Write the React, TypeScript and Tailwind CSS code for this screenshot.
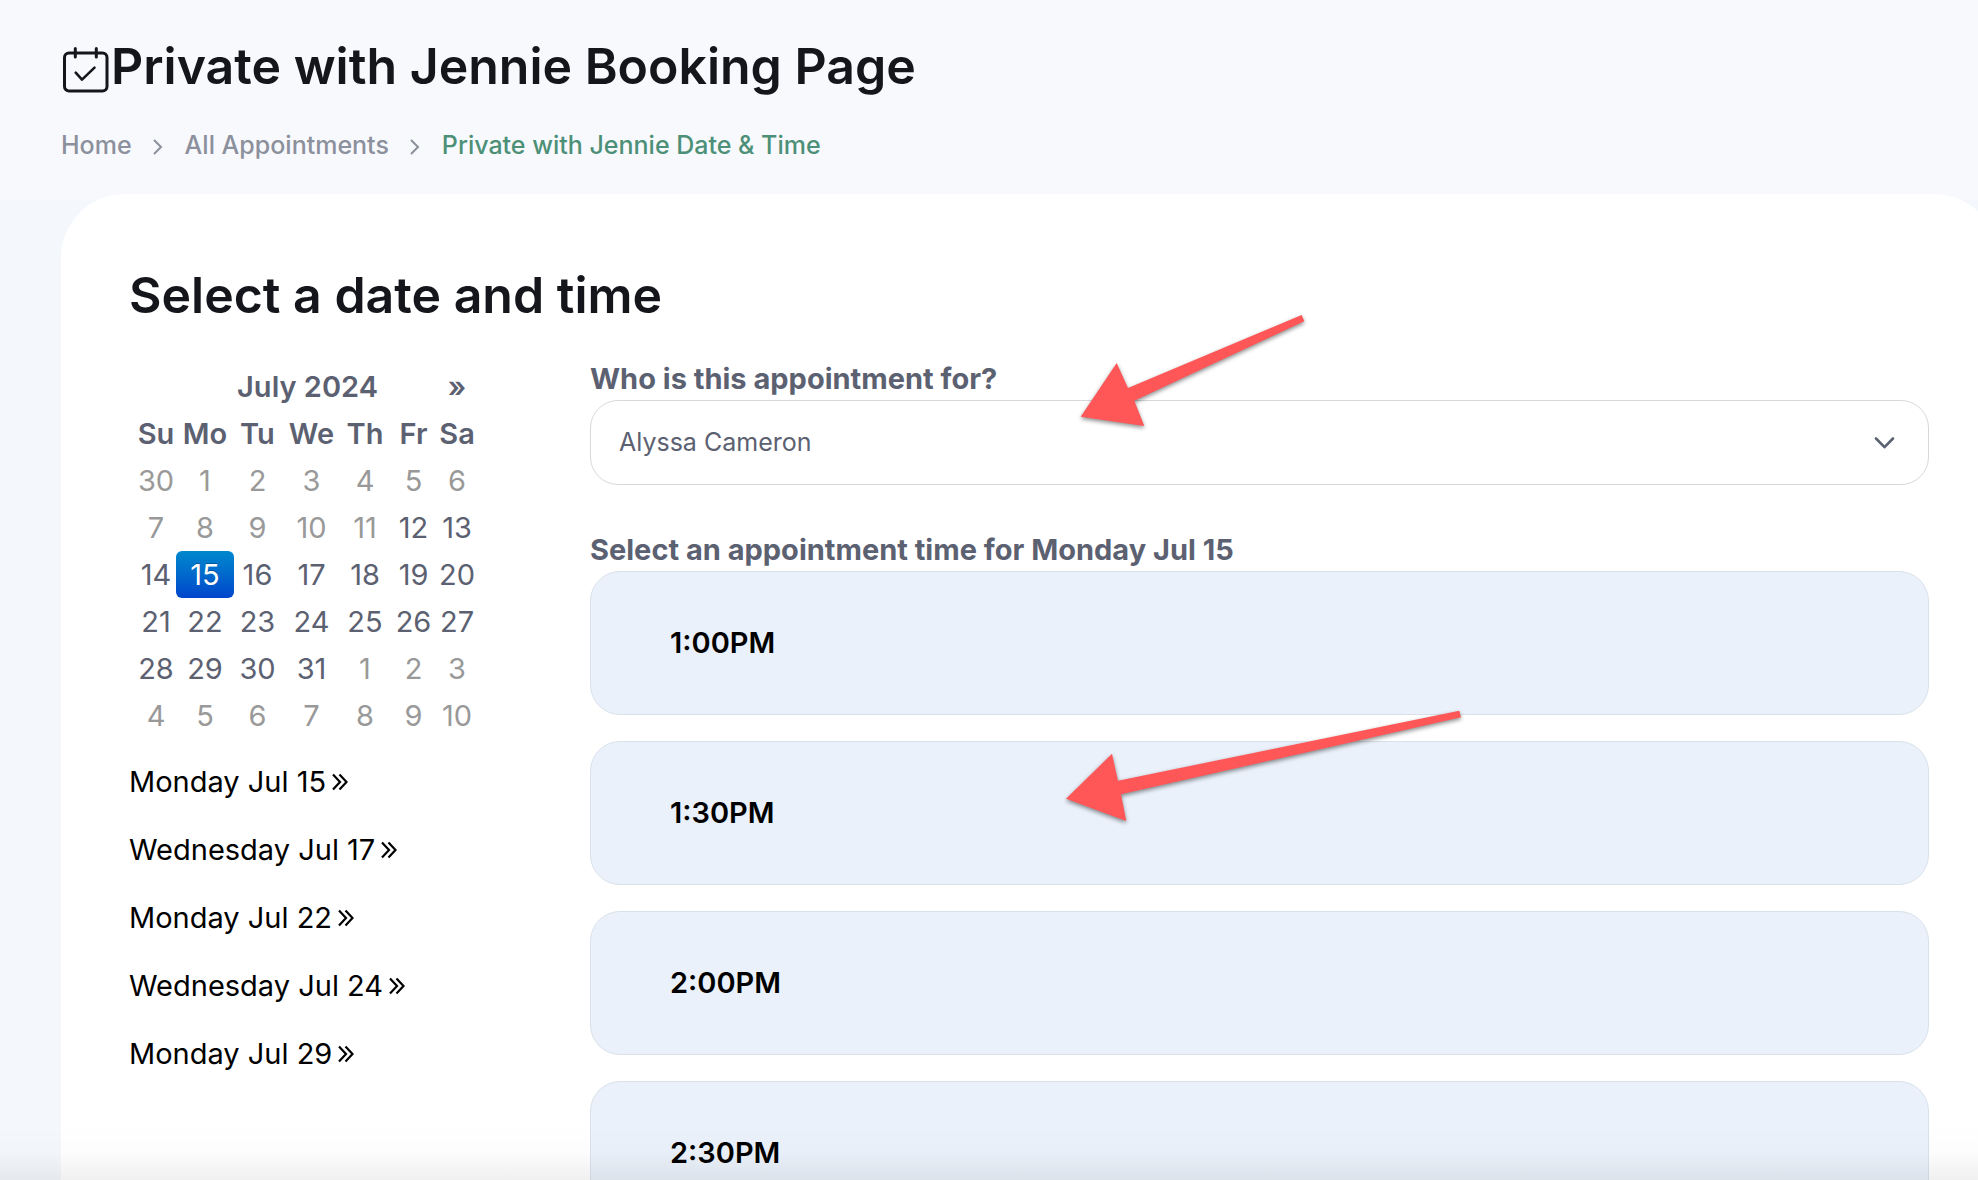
import React from "react";

type Day = { day: number; muted?: boolean; selected?: boolean };

const weekdays = ["Su", "Mo", "Tu", "We", "Th", "Fr", "Sa"];

const m = (day: number): Day => ({ day, muted: true });
const d = (day: number): Day => ({ day });

const weeks: Day[][] = [
  [m(30), m(1), m(2), m(3), m(4), m(5), m(6)],
  [m(7), m(8), m(9), m(10), m(11), d(12), d(13)],
  [d(14), { day: 15, selected: true }, d(16), d(17), d(18), d(19), d(20)],
  [d(21), d(22), d(23), d(24), d(25), d(26), d(27)],
  [d(28), d(29), d(30), d(31), m(1), m(2), m(3)],
  [m(4), m(5), m(6), m(7), m(8), m(9), m(10)],
];

const openDates = [
  "Monday Jul 15",
  "Wednesday Jul 17",
  "Monday Jul 22",
  "Wednesday Jul 24",
  "Monday Jul 29",
];

const slots = ["1:00PM", "1:30PM", "2:00PM", "2:30PM"];

const CalendarCheckIcon = () => (
  <svg
    className="mt-[9px] h-[50px] w-[50px] shrink-0"
    viewBox="0 0 50 50"
    fill="none"
    stroke="currentColor"
    strokeWidth="3"
    strokeLinecap="round"
    strokeLinejoin="round"
    aria-hidden="true"
  >
    <rect x="3.5" y="8" width="42.5" height="38" rx="4.5" />
    <path d="M14.3 3.5v8.5M35.3 3.5v8.5" />
    <path d="M14.7 27.6l6.3 7L33.5 22.6" strokeWidth="2.6" />
  </svg>
);

const CrumbSeparator = () => (
  <svg
    className="mt-1 h-4 w-[10px]"
    viewBox="0 0 10 16"
    fill="none"
    stroke="#8b909c"
    strokeWidth="2"
    aria-hidden="true"
  >
    <path d="M1 1l7 7-7 7" />
  </svg>
);

const DoubleChevron = () => (
  <svg
    className="h-[18px] w-4"
    viewBox="0 0 16 18"
    fill="none"
    stroke="currentColor"
    strokeWidth="2.2"
    aria-hidden="true"
  >
    <path d="M1 1.5L8 9l-7 7.5M7.5 1.5l7 7.5-7 7.5" />
  </svg>
);

const Calendar = () => (
  <table className="ml-[7px] w-[339px] table-fixed text-center text-[29px] leading-[47px] text-[#5c6172]">
    <colgroup>
      <col className="w-[40px]" />
      <col className="w-[58px]" />
      <col className="w-[47px]" />
      <col className="w-[61px]" />
      <col className="w-[46px]" />
      <col className="w-[51px]" />
      <col className="w-[36px]" />
    </colgroup>
    <thead>
      <tr className="h-[47px]">
        <th className="p-0" />
        <th colSpan={5} className="p-0 font-semibold">
          July 2024
        </th>
        <th className="p-0">
          <button type="button" aria-label="Next month" className="font-semibold">
            »
          </button>
        </th>
      </tr>
      <tr className="h-[47px]">
        {weekdays.map((name) => (
          <th key={name} className="p-0 font-semibold">
            <span className="flex justify-center">{name}</span>
          </th>
        ))}
      </tr>
    </thead>
    <tbody>
      {weeks.map((week, i) => (
        <tr key={i} className="h-[47px]">
          {week.map(({ day, muted, selected }) => (
            <td
              key={day}
              className={
                selected
                  ? "rounded-md bg-linear-to-b from-[#0088cc] to-[#0044cc] p-0 text-white text-shadow-[0_-1px_0_rgba(0,0,0,0.25)]"
                  : muted
                    ? "p-0 text-[#999999]"
                    : "p-0"
              }
            >
              <span className="flex justify-center">{day}</span>
            </td>
          ))}
        </tr>
      ))}
    </tbody>
  </table>
);

const Arrows = () => (
  <svg
    className="pointer-events-none absolute top-0 left-0 h-[1180px] w-[1978px] drop-shadow-[0_2px_2px_rgba(0,0,0,0.45)]"
    viewBox="0 0 1978 1180"
    fill="#ff5757"
    aria-hidden="true"
  >
    <path d="M1301.7 315l2.6 6.3L1134.3 400.7l10 25.3-63.6-9.3 36-53.7 11.3 25z" />
    <path d="M1459.3 710.7l1.7 6.6L1121 794.3l5.3 26.7-60.3-22.3 46-45 6 27z" />
  </svg>
);

const App = () => {
  return (
    <div className="relative h-screen overflow-hidden bg-[#f4f8fd] font-['Inter',sans-serif]">
      <header className="bg-[#f8f9fd] px-[61px] pt-9 pb-[39px]">
        <h1 className="flex text-[50px] leading-[60px] font-semibold text-[#14161c]">
          <CalendarCheckIcon />
          Private with Jennie Booking Page
        </h1>
        <nav
          aria-label="Breadcrumb"
          className="mt-[33px] flex items-center text-[25px] leading-8 font-medium text-[#8b909c]"
        >
          <a href="#">Home</a>
          <span className="flex w-[53px] justify-center">
            <CrumbSeparator />
          </span>
          <a href="#">All Appointments</a>
          <span className="flex w-[53px] justify-center">
            <CrumbSeparator />
          </span>
          <a href="#" className="text-[#4c9077]">
            Private with Jennie Date &amp; Time
          </a>
        </nav>
      </header>

      <main className="-mt-[6px] -mr-5 ml-[61px] min-h-screen rounded-t-[64px] bg-white pt-[71px] pr-[69px] pb-16 pl-[68px]">
        <h2 className="text-[50px] leading-[60px] font-semibold text-[#14161c]">
          Select a date and time
        </h2>

        <div className="mt-[38px] flex">
          <aside className="w-[461px] shrink-0">
            <Calendar />
            <ul className="mt-[9px] text-[29px] leading-[68px] text-black">
              {openDates.map((date) => (
                <li key={date}>
                  <a href="#" className="inline-flex items-center gap-[6px]">
                    {date}
                    <DoubleChevron />
                  </a>
                </li>
              ))}
            </ul>
          </aside>

          <section className="min-w-0 flex-1 text-[#5c6172]">
            <label htmlFor="client" className="block pb-[5px] text-[29px] leading-8 font-bold">
              Who is this appointment for?
            </label>
            <div className="relative">
              <select
                id="client"
                className="block h-[85px] w-full appearance-none rounded-[28px] border border-[#d6d8dc] bg-white px-[28px] text-[25px]"
              >
                <option>Alyssa Cameron</option>
              </select>
              <svg
                className="pointer-events-none absolute top-[36px] right-[34px] h-[14px] w-[21px]"
                viewBox="0 0 21 14"
                fill="none"
                stroke="currentColor"
                strokeWidth="2.6"
                strokeLinecap="round"
                strokeLinejoin="round"
                aria-hidden="true"
              >
                <path d="M2 2.5l8.5 8.7L19 2.5" />
              </svg>
            </div>

            <h3 className="mt-[49px] pb-[5px] text-[29px] leading-8 font-bold">
              Select an appointment time for Monday Jul 15
            </h3>
            <div className="flex flex-col gap-[26px]">
              {slots.map((slot) => (
                <button
                  key={slot}
                  type="button"
                  className="h-[144px] rounded-[30px] border border-[#d9e2ea] bg-[#eaf1fa] px-[79px] text-left text-[29px] font-semibold text-black"
                >
                  {slot}
                </button>
              ))}
            </div>
          </section>
        </div>
      </main>

      <div className="pointer-events-none absolute inset-x-0 bottom-0 h-14 bg-linear-to-b from-transparent via-black/1 to-black/6" />
      <Arrows />
    </div>
  );
};

export default App;
